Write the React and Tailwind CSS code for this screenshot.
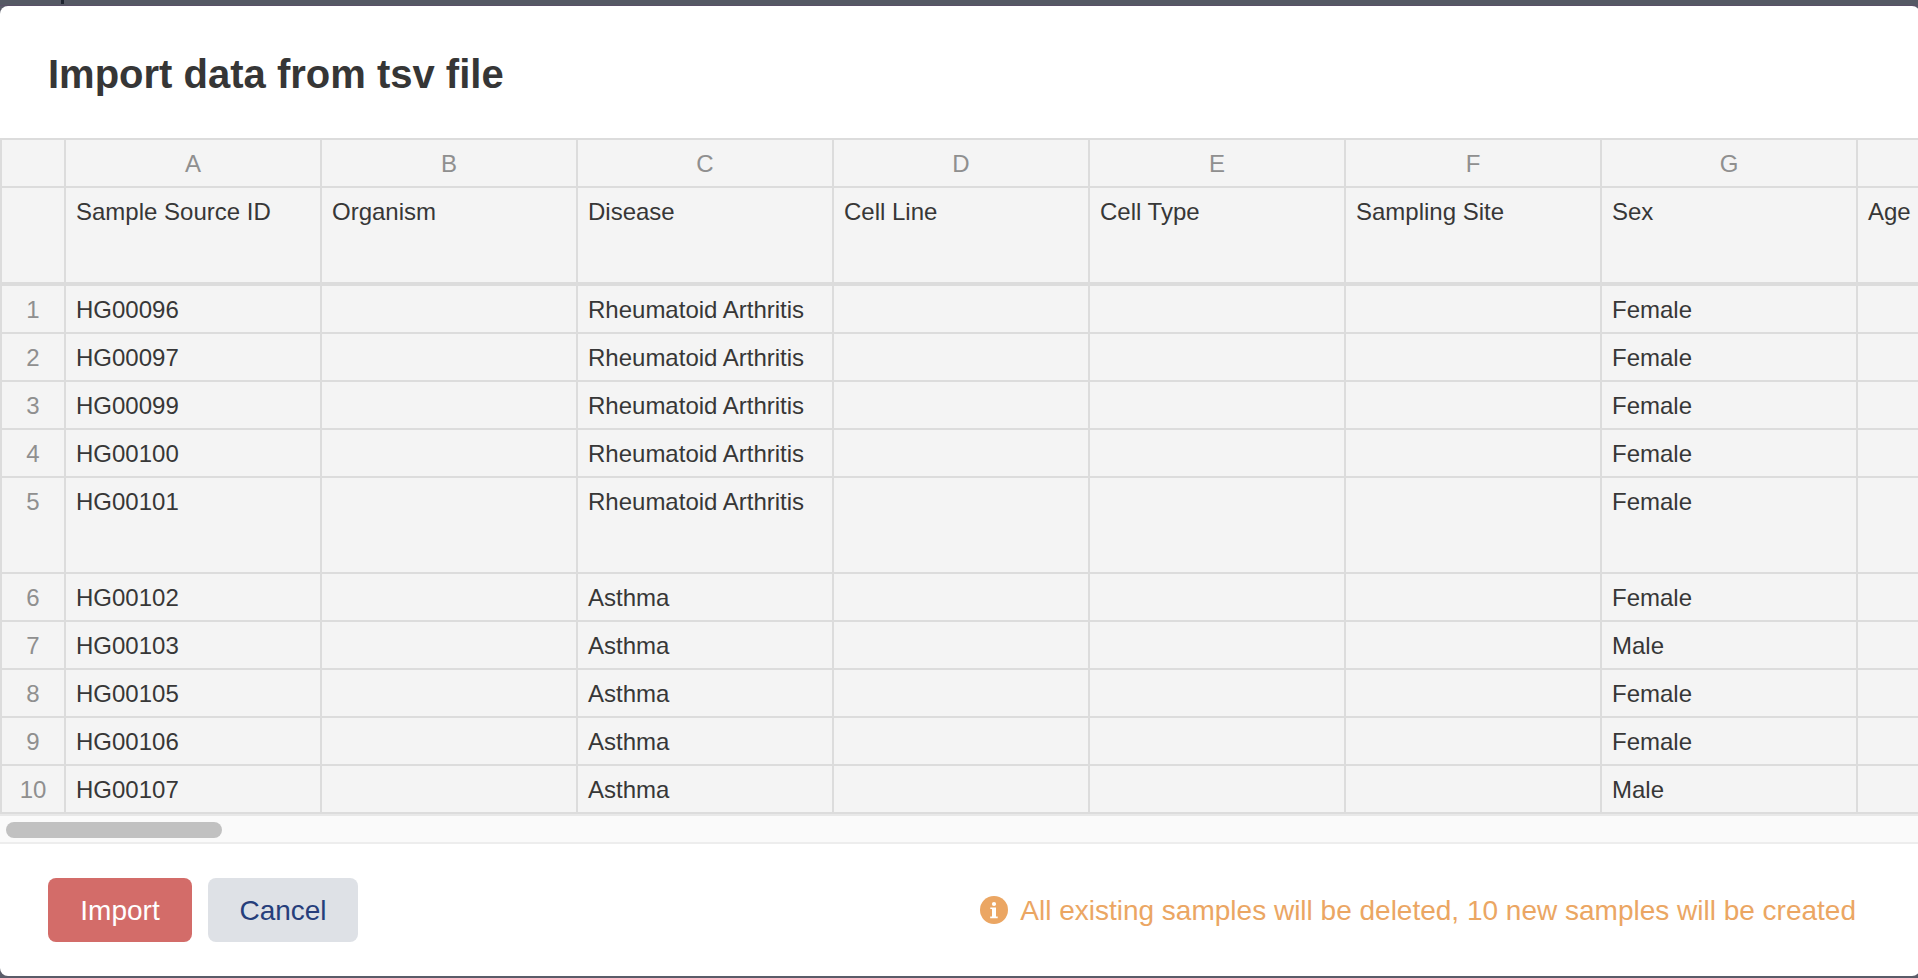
import clsx from "clsx";

const letters = ["A", "B", "C", "D", "E", "F", "G", ""];
const headers = ["Sample Source ID", "Organism", "Disease", "Cell Line", "Cell Type", "Sampling Site", "Sex", "Age"];
const samples = [
  ["HG00096", "Rheumatoid Arthritis", "Female"],
  ["HG00097", "Rheumatoid Arthritis", "Female"],
  ["HG00099", "Rheumatoid Arthritis", "Female"],
  ["HG00100", "Rheumatoid Arthritis", "Female"],
  ["HG00101", "Rheumatoid Arthritis", "Female"],
  ["HG00102", "Asthma", "Female"],
  ["HG00103", "Asthma", "Male"],
  ["HG00105", "Asthma", "Female"],
  ["HG00106", "Asthma", "Female"],
  ["HG00107", "Asthma", "Male"],
];

function InfoIcon() {
  return (
    <svg viewBox="0 0 28 28" className="size-7 shrink-0">
      <circle cx="14" cy="14" r="14" fill="currentColor" />
      <circle cx="14" cy="8" r="2.1" fill="white" />
      <path d="M10.3 11.4H16v9.2h1.7V22.2H10.2V20.6H12V13h-1.7z" fill="white" />
    </svg>
  );
}

function Row({ index, cells, height, centered, thick }) {
  return (
    <div className={clsx("flex border-[#dcdcdc]", height, thick ? "border-b-4" : "border-b-2")}>
      <div className="w-[66px] shrink-0 border-x-2 border-[#dcdcdc] text-center text-[#8f8f8f]">{index}</div>
      {cells.map((text, i) => (
        <div
          key={i}
          className={clsx(
            "w-64 shrink-0 border-r-2 border-[#dcdcdc] whitespace-nowrap",
            centered ? "text-center text-[#8f8f8f]" : "pl-2.5 text-[#373737]"
          )}
        >
          {text}
        </div>
      ))}
    </div>
  );
}

export default function App() {
  return (
    <div className="flex h-[978px] w-[1918px] flex-col overflow-hidden bg-[#5a5c69] font-['Liberation_Sans',Arial,sans-serif]">
      <div className="h-1.5 shrink-0 border-b border-[#5a5067] bg-[#555964] pl-[61px]">
        <div className="h-1 w-[3px] bg-[#1e2430]" />
      </div>
      <div className="flex h-[970px] w-[1920px] shrink-0 flex-col overflow-hidden rounded-lg bg-white">
        <h1 className="h-[132px] shrink-0 pt-11 pl-12 text-[40px] leading-[48px] font-bold text-[#363636]">
          Import data from tsv file
        </h1>
        <div className="h-[676px] shrink-0 overflow-hidden border-t-2 border-[#dcdcdc] bg-[#f4f4f4] text-2xl leading-[48px]">
          <Row height="h-12" cells={letters} centered />
          <Row height="h-[98px]" cells={headers} thick />
          {samples.map(([id, disease, sex], i) => (
            <Row
              key={id}
              index={i + 1}
              height={i === 4 ? "h-24" : "h-12"}
              cells={[id, "", disease, "", "", "", sex, ""]}
            />
          ))}
        </div>
        <div className="h-[30px] shrink-0 border-y-2 border-t-[#e8e8e8] border-b-[#ededed] bg-[#fafafa] pt-1.5 pl-1.5">
          <div className="h-4 w-[216px] rounded-full bg-[#c1c1c1]" />
        </div>
        <div className="flex grow items-center pr-16 pl-12 text-[28px]">
          <button className="h-16 w-36 rounded-lg bg-[#d36c69] pt-0.5 text-white">Import</button>
          <button className="ml-4 h-16 w-[150px] rounded-lg bg-[#dee1e6] pt-0.5 text-[#263e7b]">Cancel</button>
          <div className="ml-auto flex items-center gap-3 text-[#eba663]">
            <InfoIcon />
            <span className="pt-0.5">All existing samples will be deleted, 10 new samples will be created</span>
          </div>
        </div>
      </div>
    </div>
  );
}
